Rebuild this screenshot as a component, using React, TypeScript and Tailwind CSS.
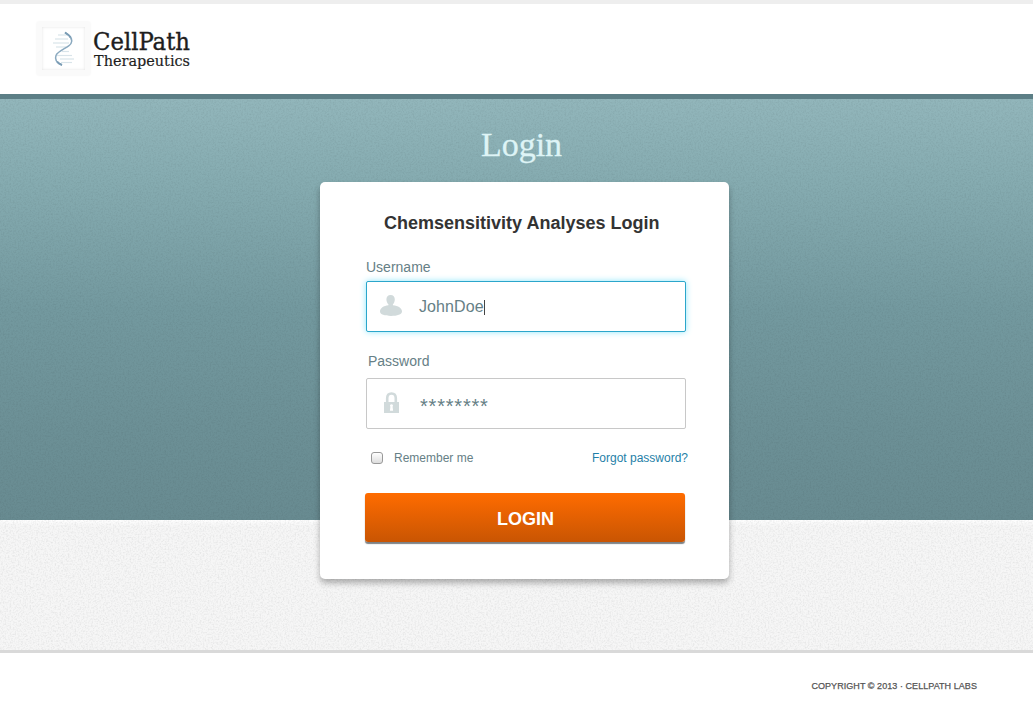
import { useState } from "react";
import type { ReactNode } from "react";
import { clsx } from "clsx";

// [x, y, width] of each rung, left to right
const RUNGS = [
  [15, 7, 9],
  [12, 11, 13],
  [10, 15, 16],
  [13, 19, 10],
  [19, 23.5, 7],
  [14, 27.5, 15],
  [17, 31, 14],
  [18, 34.5, 11],
];

function Helix() {
  return (
    <svg width="42" height="42" viewBox="0 0 42 42" fill="none">
      {RUNGS.map(([x, y, w]) => (
        <path key={y} d={`M${x} ${y}h${w}`} stroke="#d9e4ea" strokeWidth="1.2" />
      ))}
      <path d="M22 4.500C27 7.500 30 11.500 28 15.500C26 19.500 15 22.500 13 27.500C11.500 31.500 14 35 19 37" stroke="#8aa9bf" strokeWidth="1.500" />
      <path d="M22 4.500C24.500 6 26.500 7.500 27.600 9.500M14 33.500C15 35 17 36.300 19 37" stroke="#7a9cb5" strokeWidth="2" />
    </svg>
  );
}

function Logo() {
  return (
    <div className="flex items-center gap-[3px]">
      <div className="flex h-[53px] w-[53px] items-center justify-center bg-[#fafafa] shadow-[0_0_2px_#f0f0f0]">
        <div className="flex h-[43px] w-[43px] items-center justify-center bg-white shadow-[inset_0_0_3px_#e2e2e2]">
          <Helix />
        </div>
      </div>
      <svg
        width="104"
        height="50"
        className="font-['DejaVu_Serif_Condensed','DejaVu_Serif',serif] [font-stretch:condensed]"
        fill="#1d1d1d"
        stroke="#1d1d1d"
      >
        <text x="0" y="26" fontSize="25" strokeWidth="0.35" textLength="97" lengthAdjust="spacingAndGlyphs">CellPath</text>
        <text x="1" y="42" fontSize="15" strokeWidth="0.15" textLength="96" lengthAdjust="spacingAndGlyphs">Therapeutics</text>
      </svg>
    </div>
  );
}

function UserIcon() {
  return (
    <svg width="22" height="21" viewBox="0 0 22 21" fill="#d1dadb">
      <path d="M10.600 0C8 0 6.300 1.800 6.400 4.500C6.500 6.700 7.300 8.300 8.400 9.300V10.300C3.600 10.900 0 13.200 0 16.600C0 19.600 4.800 21 11 21S22 19.600 22 16.600C22 13.200 18.200 10.900 12.900 10.300V9.300C14 8.300 14.700 6.700 14.800 4.500C14.900 1.800 13.300 0 10.600 0Z" />
    </svg>
  );
}

function LockIcon() {
  return (
    <svg width="15" height="21" viewBox="0 0 15 21">
      <path d="M3.200 11V6.200C3.200 3.300 4.900 1.500 7.500 1.500S11.800 3.300 11.800 6.200V11" fill="none" stroke="#d1dadb" strokeWidth="2.600" />
      <path d="M0 10H15V21H0Z" fill="#d1dadb" />
      <path d="M7.500 12.200A1.500 1.500 0 0 1 8.600 14.700L9.100 18.800H5.900L6.400 14.700A1.500 1.500 0 0 1 7.500 12.200Z" fill="#fff" />
    </svg>
  );
}

// Fine paper grain laid over the background
function Grain() {
  return (
    <svg className="pointer-events-none absolute inset-0 h-full w-full">
      <filter id="grain" colorInterpolationFilters="sRGB">
        <feTurbulence type="fractalNoise" baseFrequency="0.6" numOctaves="2" seed="4" />
        <feColorMatrix values="0 0 0 0 0.1  0 0 0 0 0.12  0 0 0 0 0.13  0.17 0 0 0 -0.07" />
      </filter>
      <rect width="100%" height="100%" filter="url(#grain)" />
    </svg>
  );
}

function Field({ icon, active, children }: { icon: ReactNode; active?: boolean; children: ReactNode }) {
  return (
    <div
      className={clsx(
        "flex h-[51px] w-80 items-center rounded-[2px] border bg-white",
        active ? "border-[#2ba6cb] shadow-[0_0_6px_#8fe6fb]" : "border-[#c8c8c8]"
      )}
    >
      <div className="flex w-12 justify-center pb-[2px]">{icon}</div>
      {children}
    </div>
  );
}

function LoginCard() {
  const [remember, setRemember] = useState(false);

  return (
    <form
      onSubmit={e => e.preventDefault()}
      className="relative mt-[13px] ml-4 h-[397px] w-[409px] rounded-[5px] bg-white pl-[46px] text-[#668086] shadow-[0_4px_6px_rgba(0,0,0,0.3)]"
    >
      <h2 className="ml-[18px] pt-[29px] text-lg leading-6 font-bold whitespace-nowrap text-[#333]">
        Chemsensitivity Analyses Login
      </h2>

      <div className="mt-[22px] h-[24px] text-sm">Username</div>
      <Field icon={<UserIcon />} active>
        <span className="ml-1 text-base tracking-[0.1px]">JohnDoe</span>
        <span className="mt-[2px] h-[15px] w-px bg-[#444]" />
      </Field>

      <div className="mt-[19px] ml-[2px] h-[27px] text-sm">Password</div>
      <Field icon={<LockIcon />}>
        <span className="mt-[5px] ml-[5px] text-[20px] tracking-[0.8px]">********</span>
      </Field>

      <div className="mt-[20px] flex h-[18px] w-[322px] items-center justify-between text-xs">
        <label className="ml-[5px] flex items-center gap-[11px]">
          <input
            type="checkbox"
            checked={remember}
            onChange={e => setRemember(e.target.checked)}
            className="h-3 w-3 appearance-none rounded-[3px] border border-[#999] bg-linear-to-b from-white to-[#ddd]"
          />
          <span>Remember me</span>
        </label>
        <a href="#" className="text-[#1f7fa8]">Forgot password?</a>
      </div>

      <button className="mt-[26px] -ml-px block h-[49px] w-80 rounded-[3px] bg-linear-to-b from-[#ff6c00] to-[#c95503] pt-[2px] pl-px text-lg font-bold text-white shadow-[0_2px_1px_rgba(70,75,80,0.7)]">
        LOGIN
      </button>
    </form>
  );
}

export default function App() {
  return (
    <div className="flex h-[720px] w-[1033px] flex-col bg-white font-['Liberation_Sans',Arial,sans-serif]">
      <header className="flex h-[99px] items-start border-t-4 border-b-[5px] border-t-[#eee] border-b-[#5c7f86] pt-[18px] pl-[37px]">
        <Logo />
      </header>

      <main className="relative flex h-[551px] flex-col items-center bg-[linear-gradient(#92b6bb_0,#86acb1_80px,#73999f_210px,#6c9096_330px,#688b91_421px,#fefefe_421px,#f6f6f6_427px,#f6f6f6_100%)]">
        <Grain />
        <h1 className="relative ml-[10px] pt-[24px] pb-[2px] font-['Liberation_Serif','Times_New_Roman',serif] text-[34px] leading-[44px] text-[#def4f6] [-webkit-text-stroke:0.3px_#def4f6]">
          Login
        </h1>
        <LoginCard />
      </main>

      <footer className="flex flex-1 items-start justify-end border-t-[3px] border-[#d9d9d9] pt-[27px] pr-[56px] text-[9px] tracking-[0.06px] text-[#555] [-webkit-text-stroke:0.25px_#555]">
        COPYRIGHT © 2013 · CELLPATH LABS
      </footer>
    </div>
  );
}
